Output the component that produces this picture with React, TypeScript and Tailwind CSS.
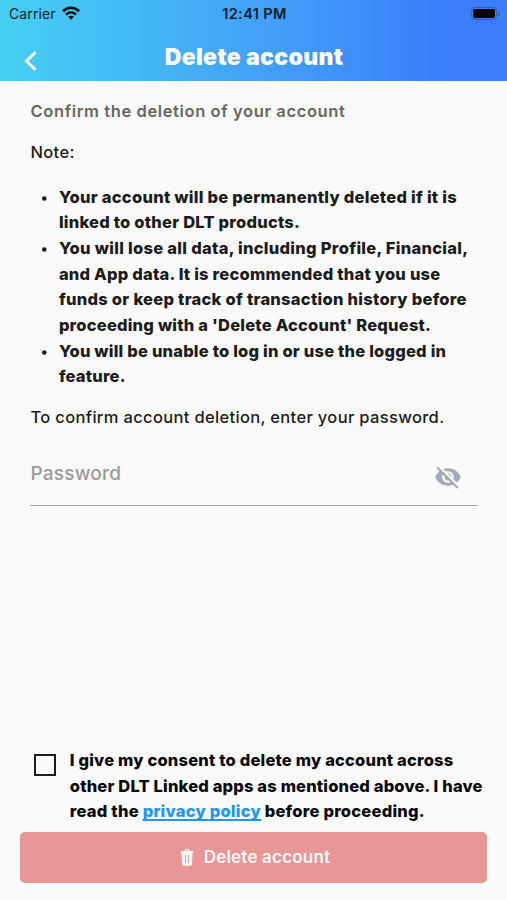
import React from "react";

const notes: { text: string; track: string }[][] = [
  [
    { text: "Your account will be permanently deleted if it is", track: "tracking-[0.26px]" },
    { text: "linked to other DLT products.", track: "tracking-[0.22px]" },
  ],
  [
    { text: "You will lose all data, including Profile, Financial,", track: "tracking-[0.29px]" },
    { text: "and App data. It is recommended that you use", track: "tracking-[0.22px]" },
    { text: "funds or keep track of transaction history before", track: "tracking-[0.27px]" },
    { text: "proceeding with a 'Delete Account' Request.", track: "tracking-[0.21px]" },
  ],
  [
    { text: "You will be unable to log in or use the logged in", track: "tracking-[0.2px]" },
    { text: "feature.", track: "tracking-[0.2px]" },
  ],
];

function StatusBar() {
  return (
    <div className="grid h-7 grid-cols-3 items-center pl-[9px] pr-[7px] text-[#06202f]">
      <div className="flex items-center gap-[6px]">
        <span className="text-[14px] tracking-[0.1px]">Carrier</span>
        <svg className="mb-[2px] h-[14px] w-[18px]" viewBox="0 0 18 14" fill="none" stroke="#031019" strokeWidth="2.7">
          <path d="M1 5.2C5.5 .6 12.5 .6 17 5.2" />
          <path d="M4 8.6C6.9 5.8 11.1 5.8 14 8.6" />
          <path d="M9 13.8 6.1 10.8C7.7 9.4 10.3 9.4 11.9 10.8Z" fill="#031019" stroke="none" />
        </svg>
      </div>
      <span className="whitespace-nowrap text-center text-[14.5px] font-semibold tracking-[0.4px]">12:41 PM</span>
      <div className="mb-px flex items-center justify-end gap-px">
        <div className="h-[13px] w-[26px] rounded-[4px] border border-[#2e5fae] p-px">
          <div className="h-full w-full rounded-[2px] bg-black" />
        </div>
        <div className="h-1 w-[2px] rounded-r-full bg-[#2e5fae]" />
      </div>
    </div>
  );
}

export default function App() {
  return (
    <div className="flex h-[900px] w-[507px] flex-col overflow-hidden bg-[#fafafa] font-['Inter',sans-serif] text-[16.5px] leading-[25.67px] text-[#1c1c1c]">
      <header className="h-[81px] shrink-0 bg-linear-to-r from-[#45d0f2] via-[#429ff8] via-54% to-[#3b7dfb] to-88%">
        <StatusBar />
        <div className="grid h-[58px] grid-cols-[60px_1fr_60px] items-center">
          <svg className="ml-6 mt-[7px] h-5 w-[13px]" viewBox="0 0 13 20" fill="none" stroke="white" strokeWidth="3">
            <path d="M11.5 1.2 2.5 10l9 8.8" />
          </svg>
          <h1 className="mt-[2px] whitespace-nowrap pl-px text-center text-[23px] font-black tracking-[0.35px] text-white">Delete account</h1>
        </div>
      </header>

      <main className="flex flex-1 flex-col whitespace-nowrap">
        <section className="px-[30px] pt-[18px]">
          <h2 className="pl-[0.5px] font-semibold tracking-[0.61px] text-[#666]">Confirm the deletion of your account</h2>
          <p className="mt-[15px] pl-[0.5px] font-medium tracking-[0.33px]">Note:</p>
          <ul className="mt-[19.4px] font-extrabold">
            {notes.map((lines) => (
              <li key={lines[0].text} className="flex">
                <svg className="h-[27px] w-[28.9px]" viewBox="0 0 28.9 27">
                  <circle cx="14.3" cy="13.5" r="2.3" fill="#1c1c1c" />
                </svg>
                <div>
                  {lines.map((line) => (
                    <div key={line.text} className={line.track}>{line.text}</div>
                  ))}
                </div>
              </li>
            ))}
          </ul>
          <p className="mt-[14.6px] pl-[0.5px] font-medium tracking-[0.33px]">To confirm account deletion, enter your password.</p>
          <div className="mt-[18px] flex h-[58px] items-center justify-between border-b border-[#a0a0a0] pr-[15px]">
            <span className="mb-[6px] pl-[0.5px] text-[19px] font-medium tracking-[0.2px] text-[#9b9b9b]">Password</span>
            <svg className="h-7 w-7" viewBox="0 0 24 24" fill="#a5a9b5">
              <path d="M12 7c2.76 0 5 2.24 5 5 0 .65-.13 1.26-.36 1.83l2.92 2.92c1.51-1.26 2.7-2.89 3.43-4.75-1.73-4.39-6-7.5-11-7.5-1.4 0-2.74.25-3.98.7l2.16 2.16C10.74 7.13 11.35 7 12 7zM2 4.27l2.28 2.28.46.46C3.08 8.3 1.78 10.02 1 12c1.73 4.39 6 7.5 11 7.5 1.55 0 3.03-.3 4.38-.84l.42.42L19.73 22 21 20.73 3.27 3 2 4.27zM7.53 9.8l1.55 1.55c-.05.21-.08.43-.08.65 0 1.66 1.34 3 3 3 .22 0 .44-.03.65-.08l1.55 1.55c-.67.33-1.41.53-2.2.53-2.76 0-5-2.24-5-5 0-.79.2-1.53.53-2.2zm4.31-.78 3.15 3.15.02-.16c0-1.66-1.34-3-3-3l-.17.01z" />
            </svg>
          </div>
        </section>

        <section className="mt-auto px-5 pb-[17px]">
          <div className="flex pl-[14px] font-extrabold text-[#080808]">
            <div className="mr-[13.8px] mt-[6px] size-[22px] border-2 border-[#1c1c1c]" />
            <div>
              <div className="tracking-[0.19px]">I give my consent to delete my account across</div>
              <div className="tracking-[0.17px]">other DLT Linked apps as mentioned above. I have</div>
              <div className="tracking-[0.23px]">
                read the <a className="text-[#2196f3] underline decoration-2 underline-offset-2 [text-decoration-skip-ink:none]">privacy policy</a> before proceeding.
              </div>
            </div>
          </div>
          <button className="mt-[7px] flex h-[51px] w-full items-center justify-center gap-[10px] rounded-[5px] bg-[#e89696] pl-[3px] font-semibold text-[#fff8f8]">
            <svg className="h-[17px] w-[14px]" viewBox="0 0 14 17">
              <path d="M4.6 2V1.2c0-.7.5-1.2 1.2-1.2h2.4c.7 0 1.2.5 1.2 1.2V2h3.1c.6 0 1 .4 1 .9s-.4.9-.9.9L12 14.8c-.1 1.2-.9 2-2.1 2H4.1c-1.2 0-2-.8-2.1-2L1.4 3.8C.9 3.8.5 3.4.5 2.9s.4-.9 1-.9zM5.7 2h2.6v-.9H5.7z" fill="#fff8f8" fillRule="evenodd" />
              <path d="M5.5 6v8M8.5 6v8" stroke="#e89696" strokeWidth=".9" />
            </svg>
            <span className="text-[17px] tracking-[0.2px]">Delete account</span>
          </button>
        </section>
      </main>
    </div>
  );
}
